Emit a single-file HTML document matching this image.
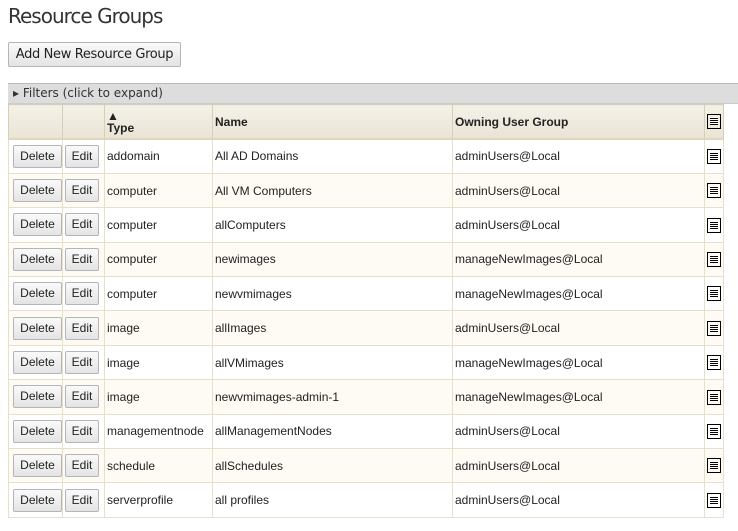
<!DOCTYPE html>
<html><head><style>
body{margin:0;background:#fff;font-family:"Liberation Sans",Arial,sans-serif;color:#222;width:738px;height:531px;overflow:hidden;position:relative}
h1{position:absolute;left:8px;top:4px;margin:0;font:20px "DejaVu Sans",sans-serif;letter-spacing:-1px;color:#333}
.btn{background:linear-gradient(#fafafa,#e4e4e4);border:1px solid #b5b5b5;border-radius:2px;color:#222;box-sizing:border-box;position:absolute}
.add{left:8px;top:42px;width:173px;height:25px;font:13px "DejaVu Sans",sans-serif;letter-spacing:-0.35px;line-height:23px;text-align:center}
.filt{position:absolute;left:8px;top:83px;width:730px;height:21px;background:#ddd;border-top:1px solid #bbb;border-bottom:1px solid #ccc;box-sizing:border-box;font:12px "DejaVu Sans",sans-serif;line-height:19px;color:#333;padding-left:5px}
table{position:absolute;left:8px;top:104px;border-collapse:collapse;font-size:12px;table-layout:fixed;width:715px}
td,th{border:1px solid #e6dfcb;padding:0 2px;text-align:left;white-space:nowrap;overflow:hidden}
th{background:linear-gradient(#f4f1e8,#e9e4d4);height:33px;font-size:12px;vertical-align:middle;border-color:#d6cfb8;border-bottom:2px solid #ddd6c2}
tr.r{height:34.4px}
tr.a td{background:#fdfbf3}
td:first-child{padding-left:4px;padding-right:0}
.b{position:static;display:inline-block;font-size:12px;height:23px;line-height:21px;width:49px;padding:0;text-align:center}
.e{width:34px}
.ic{display:inline-block;width:14px;height:15px;border:1px solid #000;box-sizing:border-box;background:repeating-linear-gradient(#fff 0 1px,#000 1px 2px);background-clip:content-box;padding:2px 2px 3px;vertical-align:middle}
</style></head><body>
<h1>Resource Groups</h1>
<div class="btn add">Add New Resource Group</div>
<div class="filt">▸ Filters (click to expand)</div>
<table>
<colgroup><col style="width:54px"><col style="width:42px"><col style="width:108px"><col style="width:240px"><col style="width:252px"><col style="width:19px"></colgroup>
<tr><th></th><th></th><th style="line-height:12px">▲<br>Type</th><th>Name</th><th>Owning User Group</th><th style="padding:0 2px"><span class="ic"></span></th></tr>
<tr class="r"><td><span class="btn b">Delete</span></td><td><span class="btn b e">Edit</span></td><td>addomain</td><td>All AD Domains</td><td>adminUsers@Local</td><td><span class="ic"></span></td></tr>
<tr class="r a"><td><span class="btn b">Delete</span></td><td><span class="btn b e">Edit</span></td><td>computer</td><td>All VM Computers</td><td>adminUsers@Local</td><td><span class="ic"></span></td></tr>
<tr class="r"><td><span class="btn b">Delete</span></td><td><span class="btn b e">Edit</span></td><td>computer</td><td>allComputers</td><td>adminUsers@Local</td><td><span class="ic"></span></td></tr>
<tr class="r a"><td><span class="btn b">Delete</span></td><td><span class="btn b e">Edit</span></td><td>computer</td><td>newimages</td><td>manageNewImages@Local</td><td><span class="ic"></span></td></tr>
<tr class="r"><td><span class="btn b">Delete</span></td><td><span class="btn b e">Edit</span></td><td>computer</td><td>newvmimages</td><td>manageNewImages@Local</td><td><span class="ic"></span></td></tr>
<tr class="r a"><td><span class="btn b">Delete</span></td><td><span class="btn b e">Edit</span></td><td>image</td><td>allImages</td><td>adminUsers@Local</td><td><span class="ic"></span></td></tr>
<tr class="r"><td><span class="btn b">Delete</span></td><td><span class="btn b e">Edit</span></td><td>image</td><td>allVMimages</td><td>manageNewImages@Local</td><td><span class="ic"></span></td></tr>
<tr class="r a"><td><span class="btn b">Delete</span></td><td><span class="btn b e">Edit</span></td><td>image</td><td>newvmimages-admin-1</td><td>manageNewImages@Local</td><td><span class="ic"></span></td></tr>
<tr class="r"><td><span class="btn b">Delete</span></td><td><span class="btn b e">Edit</span></td><td>managementnode</td><td>allManagementNodes</td><td>adminUsers@Local</td><td><span class="ic"></span></td></tr>
<tr class="r a"><td><span class="btn b">Delete</span></td><td><span class="btn b e">Edit</span></td><td>schedule</td><td>allSchedules</td><td>adminUsers@Local</td><td><span class="ic"></span></td></tr>
<tr class="r"><td><span class="btn b">Delete</span></td><td><span class="btn b e">Edit</span></td><td>serverprofile</td><td>all profiles</td><td>adminUsers@Local</td><td><span class="ic"></span></td></tr>
</table>
</body></html>
